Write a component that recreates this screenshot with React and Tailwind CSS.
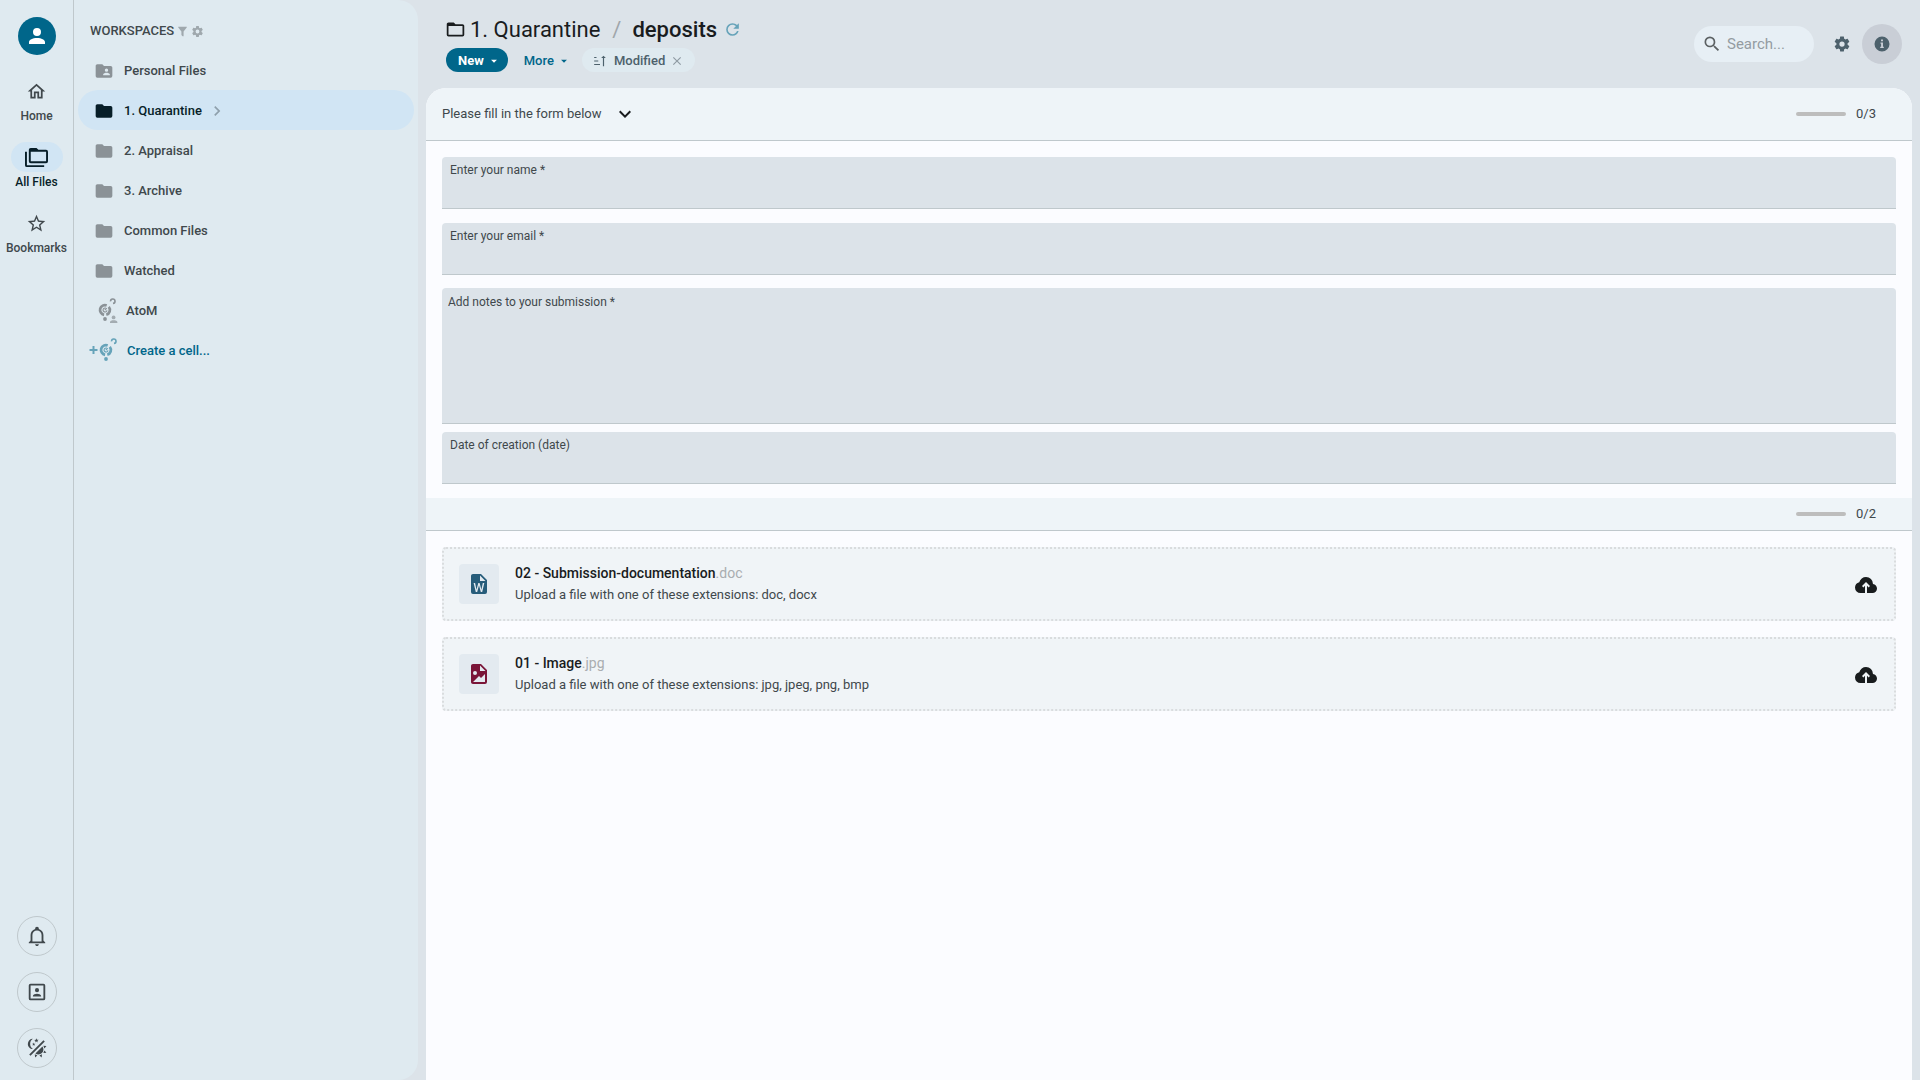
const ICONS = {
    account: 'M12,4A4,4 0 0,1 16,8A4,4 0 0,1 12,12A4,4 0 0,1 8,8A4,4 0 0,1 12,4M12,14C16.42,14 20,15.79 20,18V20H4V18C4,15.79 7.58,14 12,14Z',
    home: 'M12 5.69L17 10.19V18H15V12H9V18H7V10.19L12 5.69M12 3L2 12H5V20H11V14H13V20H19V12H22',
    folders: 'M22,4A2,2 0 0,1 24,6V16A2,2 0 0,1 22,18H6A2,2 0 0,1 4,16V4A2,2 0 0,1 6,2H12L14,4H22M2,6V20H20V22H2A2,2 0 0,1 0,20V6H2M6,6V16H22V6H6Z',
    star: 'M12,15.39L8.24,17.66L9.23,13.38L5.91,10.5L10.29,10.13L12,6.09L13.71,10.13L18.09,10.5L14.77,13.38L15.76,17.66M22,9.24L14.81,8.63L12,2L9.19,8.63L2,9.24L7.45,13.97L5.82,21L12,17.27L18.18,21L16.54,13.97L22,9.24Z',
    bell: 'M10 21H14C14 22.1 13.1 23 12 23S10 22.1 10 21M21 19V20H3V19L5 17V11C5 7.9 7 5.2 10 4.3V4C10 2.9 10.9 2 12 2S14 2.9 14 4V4.3C17 5.2 19 7.9 19 11V17L21 19M17 11C17 8.2 14.8 6 12 6S7 8.2 7 11V18H17V11Z',
    accountBox: 'M19,19H5V5H19M19,3H5A2,2 0 0,0 3,5V19A2,2 0 0,0 5,21H19A2,2 0 0,0 21,19V5A2,2 0 0,0 19,3M16.5,16.25C16.5,14.75 13.5,14 12,14C10.5,14 7.5,14.75 7.5,16.25V17H16.5M12,12.25A2.25,2.25 0 0,0 14.25,10A2.25,2.25 0 0,0 12,7.75A2.25,2.25 0 0,0 9.75,10A2.25,2.25 0 0,0 12,12.25Z',
    theme: 'M7.5,2C5.71,3.15 4.5,5.18 4.5,7.5C4.5,9.82 5.71,11.85 7.53,13C4.46,13 2,10.54 2,7.5A5.5,5.5 0 0,1 7.5,2M19.07,3.5L20.5,4.93L4.93,20.5L3.5,19.07L19.07,3.5M12.89,5.93L11.41,5L9.97,6L10.39,4.3L9,3.24L10.75,3.12L11.33,1.47L12,3.1L13.73,3.13L12.38,4.26L12.89,5.93M9.59,9.54L8.43,8.81L7.31,9.59L7.65,8.27L6.56,7.44L7.92,7.35L8.37,6.06L8.88,7.33L10.24,7.36L9.19,8.23L9.59,9.54M19,13.5A5.5,5.5 0 0,1 13.5,19C12.28,19 11.15,18.6 10.24,17.93L17.93,10.24C18.6,11.15 19,12.28 19,13.5M14.6,20.08L17.37,18.93L17.13,22.28L14.6,20.08M18.93,17.38L20.08,14.61L22.28,17.15L18.93,17.38M20.08,12.42L18.94,9.64L22.28,9.88L20.08,12.42M9.63,18.93L12.4,20.08L9.87,22.27L9.63,18.93Z',
    filter: 'M14,12V19.88C14.04,20.18 13.94,20.5 13.71,20.71C13.32,21.1 12.69,21.1 12.3,20.71L10.29,18.7C10.06,18.47 9.96,18.16 10,17.87V12H9.97L4.21,4.62C3.87,4.19 3.95,3.56 4.38,3.22C4.57,3.08 4.78,3 5,3H19C19.22,3 19.43,3.08 19.62,3.22C20.05,3.56 20.13,4.19 19.79,4.62L14.03,12H14Z',
    cog: 'M12,15.5A3.5,3.5 0 0,1 8.5,12A3.5,3.5 0 0,1 12,8.5A3.5,3.5 0 0,1 15.5,12A3.5,3.5 0 0,1 12,15.5M19.43,12.97C19.47,12.65 19.5,12.33 19.5,12C19.5,11.67 19.47,11.34 19.43,11L21.54,9.37C21.73,9.22 21.78,8.95 21.66,8.73L19.66,5.27C19.54,5.05 19.27,4.96 19.05,5.05L16.56,6.05C16.04,5.66 15.5,5.32 14.87,5.07L14.5,2.42C14.46,2.18 14.25,2 14,2H10C9.75,2 9.54,2.18 9.5,2.42L9.13,5.07C8.5,5.32 7.96,5.66 7.44,6.05L4.95,5.05C4.73,4.96 4.46,5.05 4.34,5.27L2.34,8.73C2.21,8.95 2.27,9.22 2.46,9.37L4.57,11C4.53,11.34 4.5,11.67 4.5,12C4.5,12.33 4.53,12.65 4.57,12.97L2.46,14.63C2.27,14.78 2.21,15.05 2.34,15.27L4.34,18.73C4.46,18.95 4.73,19.03 4.95,18.95L7.44,17.94C7.96,18.34 8.5,18.68 9.13,18.93L9.5,21.58C9.54,21.82 9.75,22 10,22H14C14.25,22 14.46,21.82 14.5,21.58L14.87,18.93C15.5,18.67 16.04,18.34 16.56,17.94L19.05,18.95C19.27,19.03 19.54,18.95 19.66,18.73L21.66,15.27C21.78,15.05 21.73,14.78 21.54,14.63L19.43,12.97Z',
    folder: 'M10,4H4C2.89,4 2,4.89 2,6V18A2,2 0 0,0 4,20H20A2,2 0 0,0 22,18V8C22,6.89 21.1,6 20,6H12L10,4Z',
    folderAccount: 'M19,17H11V16C11,14.67 13.67,14 15,14C16.33,14 19,14.67 19,16M15,9A2,2 0 0,1 17,11A2,2 0 0,1 15,13A2,2 0 0,1 13,11C13,9.89 13.9,9 15,9M20,6H12L10,4H4C2.89,4 2,4.89 2,6V18A2,2 0 0,0 4,20H20A2,2 0 0,0 22,18V8C22,6.89 21.1,6 20,6Z',
    folderOutline: 'M20,18H4V8H20M20,6H12L10,4H4C2.89,4 2,4.89 2,6V18A2,2 0 0,0 4,20H20A2,2 0 0,0 22,18V8C22,6.89 21.1,6 20,6Z',
    chevronRight: 'M8.59,16.58L13.17,12L8.59,7.41L10,6L16,12L10,18L8.59,16.58Z',
    chevronDown: 'M7.41,8.58L12,13.17L16.59,8.58L18,10L12,16L6,10L7.41,8.58Z',
    menuDown: 'M7,10L12,15L17,10H7Z',
    refresh: 'M17.65,6.35C16.2,4.9 14.21,4 12,4A8,8 0 0,0 4,12A8,8 0 0,0 12,20C15.73,20 18.84,17.45 19.73,14H17.65C16.83,16.33 14.61,18 12,18A6,6 0 0,1 6,12A6,6 0 0,1 12,6C13.66,6 15.14,6.69 16.22,7.78L13,11H20V4L17.65,6.35Z',
    sort: 'M19 7H22L18 3L14 7H17V21H19M2 17H12V19H2M6 5V7H2V5M2 11H9V13H2V11Z',
    close: 'M19,6.41L17.59,5L12,10.59L6.41,5L5,6.41L10.59,12L5,17.59L6.41,19L12,13.41L17.59,19L19,17.59L13.41,12L19,6.41Z',
    magnify: 'M9.5,3A6.5,6.5 0 0,1 16,9.5C16,11.11 15.41,12.59 14.44,13.73L14.71,14H15.5L20.5,19L19,20.5L14,15.5V14.71L13.73,14.44C12.59,15.41 11.11,16 9.5,16A6.5,6.5 0 0,1 3,9.5A6.5,6.5 0 0,1 9.5,3M9.5,5C7,5 5,7 5,9.5C5,12 7,14 9.5,14C12,14 14,12 14,9.5C14,7 12,5 9.5,5Z',
    info: 'M12,2A10,10 0 0,0 2,12A10,10 0 0,0 12,22A10,10 0 0,0 22,12A10,10 0 0,0 12,2M10.7,6H13.3V8.4H10.7M10,10H13.3V15.6H14.4V17.2H9.6V15.6H10.8V11.6H10Z',
    fileWord: 'M15.2,20H13.8L12,13.2L10.2,20H8.8L6.6,11H8.1L9.5,17.8L11.3,11H12.6L14.4,17.8L15.8,11H17.3L15.2,20M13,9V3.5L18.5,9H13M14,2H6C4.89,2 4,2.89 4,4V20A2,2 0 0,0 6,22H18A2,2 0 0,0 20,20V8L14,2Z',
    fileImage: 'M13,9H18.5L13,3.5V9M6,2H14L20,8V20A2,2 0 0,1 18,22H6C4.89,22 4,21.1 4,20V4C4,2.89 4.89,2 6,2M6,20H15L18,20V12L14,16L12,14L6,20M8,9A2,2 0 0,0 6,11A2,2 0 0,0 8,13A2,2 0 0,0 10,11A2,2 0 0,0 8,9Z',
    cloudUpload: 'M11 20H6.5Q4.22 20 2.61 18.43 1 16.85 1 14.58 1 12.63 2.17 11.1 3.35 9.57 5.25 9.15 5.88 6.85 7.75 5.43 9.63 4 12 4 14.93 4 16.96 6.04 19 8.07 19 11 20.73 11.2 21.86 12.5 23 13.78 23 15.5 23 17.38 21.69 18.69 20.38 20 18.5 20H13V12.85L14.6 14.4L16 13L12 9L8 13L9.4 14.4L11 12.85Z'
}

const Icon = ({ name, className = '' }) => (
    <svg viewBox="0 0 24 24" fill="currentColor" fillRule="evenodd" aria-hidden="true" className={`shrink-0 ${className}`}>
        <path d={ICONS[name]} />
    </svg>
)

// Cell logo: broken ring around a small spiral, with a hook above and a dot below
const CellIcon = ({ variant }) => (
    <svg viewBox="0 0 34 26" fill="none" stroke="currentColor" aria-hidden="true" className="h-[26px] w-[34px] shrink-0">
        {variant === 'add' && <path d="M0.5 12H8.5M4.5 8V16" strokeWidth="2" />}
        <path d="M18.7 7.4A4.9 4.9 0 1 0 16.1 16.8M20.8 8.9A4.9 4.9 0 0 1 18.3 16.7" strokeWidth="2.7" />
        <path d="M17.8 10.1A2 2 0 1 0 19 12.4M16.8 12.2L18.8 10.2" strokeWidth="1.1" />
        <path d="M22.6 3.4A2.2 2.2 0 1 1 25 5.4" strokeWidth="1.6" />
        <circle cx="17" cy="21" r="1.9" fill="currentColor" stroke="none" />
        {variant === 'user' && (
            <g fill="currentColor" stroke="none" opacity="0.7">
                <circle cx="25.6" cy="19.4" r="1.9" />
                <path d="M22 25V24.2C22 22.8 23.8 22.2 25.6 22.2S29.4 22.8 29.4 24.2V25Z" />
            </g>
        )}
    </svg>
)

const railItems = [
    { label: 'Home', icon: 'home', size: 'size-[21px]' },
    { label: 'All Files', icon: 'folders', size: 'size-[23px]', active: true },
    { label: 'Bookmarks', icon: 'star', size: 'size-[21px]' }
]

const railButtons = [
    { label: 'Notifications', icon: 'bell' },
    { label: 'Address book', icon: 'accountBox' },
    { label: 'Switch theme', icon: 'theme' }
]

const workspaces = [
    { label: 'Personal Files', icon: 'folderAccount' },
    { label: '1. Quarantine', icon: 'folder', active: true },
    { label: '2. Appraisal', icon: 'folder' },
    { label: '3. Archive', icon: 'folder' },
    { label: 'Common Files', icon: 'folder' },
    { label: 'Watched', icon: 'folder' }
]

const uploads = [
    { name: '02 - Submission-documentation', ext: '.doc', types: 'doc, docx', icon: 'fileWord', color: 'text-[#265c7a]' },
    { name: '01 - Image', ext: '.jpg', types: 'jpg, jpeg, png, bmp', icon: 'fileImage', color: 'text-[#7a1538]' }
]

const Rail = () => (
    <nav className="flex w-[74px] shrink-0 flex-col items-center border-r border-[#bfc8cc] pt-[17px] pb-3">
        <button aria-label="Account" className="flex size-[38px] items-center justify-center rounded-full bg-[#00668a] text-white">
            <Icon name="account" className="size-6" />
        </button>
        <div className="mt-[21px] flex flex-col gap-4">
            {railItems.map((item) => (
                <a
                    key={item.label}
                    href="#"
                    className={`flex flex-col items-center text-xs leading-5 font-medium ${item.active ? 'text-[#071e28]' : 'text-[#40484c]'}`}
                >
                    <span className={`flex h-[30px] w-[52px] items-center justify-center rounded-full ${item.active ? 'bg-[#d1e5f4]' : ''}`}>
                        <Icon name={item.icon} className={item.size} />
                    </span>
                    {item.label}
                </a>
            ))}
        </div>
        <div className="mt-auto flex flex-col gap-4">
            {railButtons.map((item) => (
                <button
                    key={item.label}
                    aria-label={item.label}
                    className="flex size-10 items-center justify-center rounded-full border border-[#bfc8cc] text-[#40484c]"
                >
                    <Icon name={item.icon} className="size-[22px]" />
                </button>
            ))}
        </div>
    </nav>
)

const Workspaces = () => (
    <aside className="w-[344px] shrink-0 px-1 pt-[21px] text-[13px] font-medium text-[#40484c]">
        <div className="mb-[9px] flex h-5 items-center pl-3">
            <h2>WORKSPACES</h2>
            <button aria-label="Filter" className="ml-0.5 text-[#9fa8ad]">
                <Icon name="filter" className="size-[13px]" />
            </button>
            <button aria-label="Workspace settings" className="ml-0.5 text-[#9fa8ad]">
                <Icon name="cog" className="size-[13px]" />
            </button>
        </div>
        {workspaces.map((item) => (
            <a
                key={item.label}
                href="#"
                className={`flex h-10 items-center rounded-full pt-0.5 pl-4 ${item.active ? 'bg-[#d1e5f4] text-[#071e28]' : ''}`}
            >
                <Icon name={item.icon} className={`size-5 ${item.active ? '' : 'text-[#8b9297]'}`} />
                <span className="ml-[10px]">{item.label}</span>
                {item.active && <Icon name="chevronRight" className="ml-[5px] size-5 text-[#8fa0ac]" />}
            </a>
        ))}
        <a href="#" className="flex h-10 items-center gap-1 pt-0.5 pl-[10px]">
            <span className="text-[#8b9297]">
                <CellIcon variant="user" />
            </span>
            AtoM
        </a>
        <a href="#" className="flex h-10 items-center gap-1 pt-0.5 pl-[11px] text-[#00668a]">
            <span className="text-[#66a3b9]">
                <CellIcon variant="add" />
            </span>
            Create a cell...
        </a>
    </aside>
)

const Header = () => (
    <header className="flex h-[88px] items-center justify-between pr-[10px] pl-5">
        <div className="h-full pt-[15px]">
            <h1 className="flex h-7 items-center text-[22px] text-[#191c1e]">
                <Icon name="folderOutline" className="-ml-px size-[21px]" />
                <a href="#" className="ml-1">1. Quarantine</a>
                <span className="mr-[11px] ml-3 text-[#a0a6ab]">/</span>
                <span className="font-medium">deposits</span>
                <button aria-label="Refresh" className="ml-[6px] text-[#66a3b9]">
                    <Icon name="refresh" className="size-[19px]" />
                </button>
            </h1>
            <div className="mt-[5px] flex h-6 items-center text-[13px] font-medium">
                <button className="flex h-6 items-center gap-[3px] rounded-full bg-[#00668a] pt-px pr-[7px] pl-3 font-bold text-white">
                    New
                    <Icon name="menuDown" className="size-[14px]" />
                </button>
                <button className="ml-4 flex h-6 items-center gap-[3px] pt-0.5 text-[#00668a]">
                    More
                    <Icon name="menuDown" className="size-[14px]" />
                </button>
                <div className="ml-[11px] flex h-6 items-center rounded-full bg-[#dfeaf0] px-[11px] pt-px text-[#4d616c]">
                    <Icon name="sort" className="size-[14px]" />
                    <span className="ml-[7px]">Modified</span>
                    <button aria-label="Clear sorting" className="ml-[5px] text-[#8f9ba3]">
                        <Icon name="close" className="size-[14px]" />
                    </button>
                </div>
            </div>
        </div>
        <div className="flex items-center">
            <label className="flex h-9 w-[120px] items-center rounded-full bg-[#e7eff5] pl-2">
                <Icon name="magnify" className="size-5 text-[#5c6163]" />
                <input
                    type="text"
                    aria-label="Search"
                    placeholder="Search..."
                    className="ml-[5px] w-20 min-w-0 bg-transparent text-[15px] text-[#40484c] outline-none placeholder:text-[#949ca1]"
                />
            </label>
            <button aria-label="Settings" className="ml-2 flex size-10 items-center justify-center text-[#4d616c]">
                <Icon name="cog" className="size-[18px]" />
            </button>
            <button aria-label="Information" className="flex size-10 items-center justify-center rounded-full bg-[#c9ced6] text-[#4d616c]">
                <Icon name="info" className="size-[18px]" />
            </button>
        </div>
    </header>
)

const Counter = ({ value }) => (
    <div className="flex items-center gap-[10px]">
        <span className="h-1 w-[50px] rounded-full bg-[#bdbdbd]" />
        <span>{value}</span>
    </div>
)

const Field = ({ id, label, type = 'text' }) => (
    <div className="h-[52px] rounded-t border-b border-[#bfc8cc] bg-[#dce3e9] px-2 pt-1">
        <label htmlFor={id} className="block text-xs leading-[18px]">{label}</label>
        <input id={id} type={type} className="block h-6 w-full bg-transparent text-[13px] outline-none" />
    </div>
)

const UploadRow = ({ file }) => (
    <div className="flex h-[74px] items-center rounded border-2 border-dotted border-[#d9dcde] bg-[#f0f4f7] pr-4 pl-[15px]">
        <span className={`flex size-10 items-center justify-center rounded bg-[#e3eaf0] ${file.color}`}>
            <Icon name={file.icon} className="size-6" />
        </span>
        <div className="ml-4 flex-1">
            <div className="text-sm leading-[21px] text-[#a9adb0]">
                <span className="font-medium text-[#191c1e]">{file.name}</span>
                {file.ext}
            </div>
            <div className="text-[13px] leading-[21px]">Upload a file with one of these extensions: {file.types}</div>
        </div>
        <button aria-label={`Upload ${file.name}`} className="pt-0.5 text-[#191c1e]">
            <Icon name="cloudUpload" className="size-6" />
        </button>
    </div>
)

const App = () => {
    return (
        <div className="flex h-screen overflow-hidden bg-[#dce3e9] font-['Roboto',sans-serif] text-[#40484c]">
            <div className="flex shrink-0 rounded-r-[20px] bg-[#dfeaf0]">
                <Rail />
                <Workspaces />
            </div>
            <div className="flex min-w-0 flex-1 flex-col px-2">
                <Header />
                <main className="flex-1 overflow-hidden rounded-t-[20px] bg-[#fbfcff] text-[13px]">
                    <div className="flex h-[53px] items-center justify-between border-b border-[#bfc8cc] bg-[#eef4f8] pr-9 pl-4">
                        <button className="flex items-center gap-[11px]">
                            Please fill in the form below
                            <Icon name="chevronDown" className="size-6 text-[#191c1e]" />
                        </button>
                        <Counter value="0/3" />
                    </div>
                    <form className="px-4 pt-4 pb-[14px]">
                        <div className="flex flex-col gap-[14px]">
                            <Field id="name" label="Enter your name *" />
                            <Field id="email" label="Enter your email *" />
                        </div>
                        <div className="mt-[13px] mb-2 rounded-t border-b border-[#bfc8cc] bg-[#dce3e9] px-[6px] pt-1">
                            <label htmlFor="notes" className="block text-xs leading-5">Add notes to your submission *</label>
                            <textarea id="notes" className="block h-[111px] w-full resize-none bg-transparent outline-none" />
                        </div>
                        <Field id="date" label="Date of creation (date)" />
                    </form>
                    <div className="flex h-[33px] items-center justify-end border-b border-[#bfc8cc] bg-[#eef4f8] pr-9">
                        <Counter value="0/2" />
                    </div>
                    <div className="flex flex-col gap-4 p-4">
                        {uploads.map((file) => (
                            <UploadRow key={file.name} file={file} />
                        ))}
                    </div>
                </main>
            </div>
        </div>
    )
}

export default App
